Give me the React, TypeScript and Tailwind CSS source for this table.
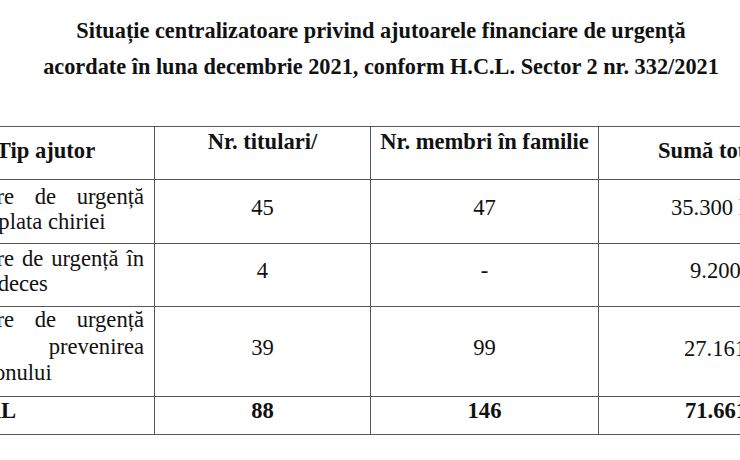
import React from "react";

const J = ({ children }: { children: React.ReactNode }) => (
  <div className="text-justify [text-align-last:justify]">{children}</div>
);
const L = ({ children, className = "" }: { children: React.ReactNode; className?: string }) => (
  <div className={`text-left ${className}`}>{children}</div>
);

export default function App() {
  const td = "border border-[#585858] align-middle";
  return (
    <div className="w-[740px] h-[460px] overflow-hidden bg-white font-['Liberation_Serif'] text-[#111]">
      <div className="pt-[13px] pl-[22px] text-center font-bold text-[22.3px] leading-[36px]">
        <div>Situație centralizatoare privind ajutoarele financiare de urgență</div>
        <div>acordate în luna decembrie 2021, conform H.C.L. Sector 2 nr. 332/2021</div>
      </div>
      <div className="mt-[41px] -ml-[72px]">
        <table className="table-fixed border-collapse w-[900px] font-['Liberation_Serif'] text-[22.6px] leading-[25.5px]">
          <colgroup>
            <col className="w-[226px]" />
            <col className="w-[216px]" />
            <col className="w-[228px]" />
            <col className="w-[230px]" />
          </colgroup>
          <tbody>
            <tr>
              <td className={`${td} h-[53px] font-bold text-center pl-[18px] pr-[10px] pb-[5px]`}>Tip ajutor</td>
              <td className={`${td} font-bold text-center !align-top pt-[2px]`}>Nr. titulari/</td>
              <td className={`${td} font-bold text-center !align-top pt-[2px]`}>Nr. membri în familie</td>
              <td className={`${td} font-bold text-left pl-[59px] pb-[4px]`}>Sumă totală</td>
            </tr>
            <tr>
              <td className={`${td} h-[64px] pl-[6px] pr-[10px] pb-[5px]`}>
                <J>Ajutoare de urgență</J>
                <L>pentru plata chiriei</L>
              </td>
              <td className={`${td} text-center pb-[8px]`}>45</td>
              <td className={`${td} text-center pb-[8px]`}>47</td>
              <td className={`${td} text-left pl-[72px] pb-[8px]`}>35.300 lei</td>
            </tr>
            <tr>
              <td className={`${td} h-[63px] pl-[6px] pr-[10px] pb-[8px]`}>
                <J>Ajutoare de urgență în</J>
                <L>caz de deces</L>
              </td>
              <td className={`${td} text-center pb-[8px]`}>4</td>
              <td className={`${td} text-center pb-[8px]`}>-</td>
              <td className={`${td} text-left pl-[91px] pb-[8px]`}>9.200 lei</td>
            </tr>
            <tr>
              <td className={`${td} h-[89px] pl-[6px] pr-[10px] pb-[9px] leading-[26.5px]`}>
                <J>Ajutoare de urgență</J>
                <J>pentru prevenirea</J>
                <L className="pl-[5px]">abandonului</L>
              </td>
              <td className={`${td} text-center pb-[8px]`}>39</td>
              <td className={`${td} text-center pb-[8px]`}>99</td>
              <td className={`${td} text-left pl-[85px] pb-[5px]`}>27.161 lei</td>
            </tr>
            <tr>
              <td className={`${td} h-[38px] pl-[10px] pr-[10px] pb-[8px] font-bold text-left`}>TOTAL</td>
              <td className={`${td} text-center font-bold pb-[8px]`}>88</td>
              <td className={`${td} text-center font-bold pb-[8px]`}>146</td>
              <td className={`${td} text-left pl-[86px] font-bold pb-[8px]`}>71.661 lei</td>
            </tr>
          </tbody>
        </table>
      </div>
    </div>
  );
}
